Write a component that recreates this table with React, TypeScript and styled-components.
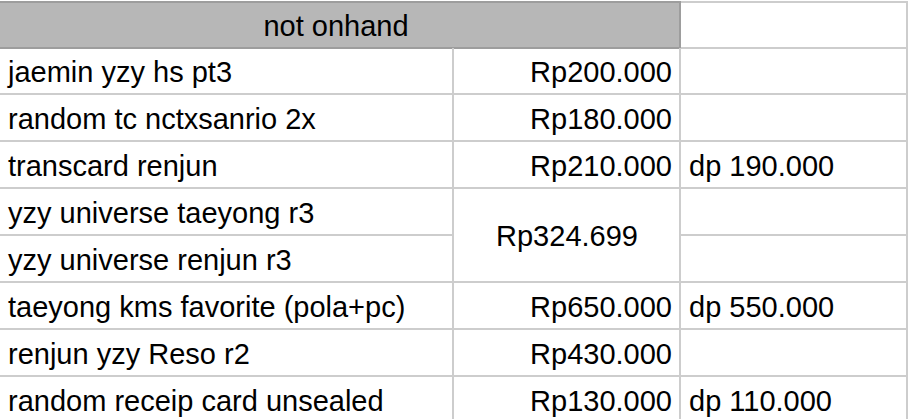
import { Fragment } from 'react'
import styled, { createGlobalStyle } from 'styled-components'

const GlobalStyle = createGlobalStyle`
    html, body {
        margin: 0;
        padding: 0;
        background: #ffffff;
    }
    body {
        font-family: "Liberation Sans", Arial, sans-serif;
        overflow: hidden;
    }
`

const Sheet = styled.div`
    display: grid;
    grid-template-columns: 454px 227px 227px;
    grid-auto-rows: 47px;
    padding-top: 1px;
    width: 908px;
`

const Cell = styled.div<{ $align?: 'left' | 'right' | 'center', $rows?: number }>`
    box-sizing: border-box;
    display: flex;
    align-items: center;
    justify-content: ${props =>
        props.$align === 'right' ? 'flex-end' : props.$align === 'center' ? 'center' : 'flex-start'};
    grid-row: span ${props => props.$rows || 1};
    padding: 3px 7px 0 8px;
    border-right: 2px solid #cdcdcd;
    border-bottom: 2px solid #cdcdcd;
    font-size: 29px;
    color: #000;
    white-space: nowrap;
    overflow: hidden;
`

const HeaderCell = styled(Cell)`
    grid-column: span 2;
    height: 48px;
    justify-content: center;
    background-color: #b7b7b7;
    border-top: 2px solid #9d9d9d;
    border-right-color: #9d9d9d;
    border-bottom-color: #9d9d9d;
    padding-left: 0;
    padding-top: 3px;
`

const HeaderBlank = styled(Cell)`
    height: 48px;
    border-top: 2px solid #cdcdcd;
`

type Row = { name: string; price?: string; dp?: string; merged?: number }

const rows: Row[] = [
    { name: 'jaemin yzy hs pt3', price: 'Rp200.000' },
    { name: 'random tc nctxsanrio 2x', price: 'Rp180.000' },
    { name: 'transcard renjun', price: 'Rp210.000', dp: 'dp 190.000' },
    { name: 'yzy universe taeyong r3', price: 'Rp324.699', merged: 2 },
    { name: 'yzy universe renjun r3', merged: 0 },
    { name: 'taeyong kms favorite (pola+pc)', price: 'Rp650.000', dp: 'dp 550.000' },
    { name: 'renjun yzy Reso r2', price: 'Rp430.000' },
    { name: 'random receip card unsealed', price: 'Rp130.000', dp: 'dp 110.000' },
]

export default function App() {
    return (
        <>
            <GlobalStyle />
            <Sheet>
                <HeaderCell>not onhand</HeaderCell>
                <HeaderBlank />
                {rows.map((r, i) => (
                    <Fragment key={i}>
                        <Cell>{r.name}</Cell>
                        {r.merged === 2 && <Cell $align="center" $rows={2}>{r.price}</Cell>}
                        {r.merged === undefined && <Cell $align="right">{r.price}</Cell>}
                        <Cell>{r.dp}</Cell>
                    </Fragment>
                ))}
            </Sheet>
        </>
    )
}
